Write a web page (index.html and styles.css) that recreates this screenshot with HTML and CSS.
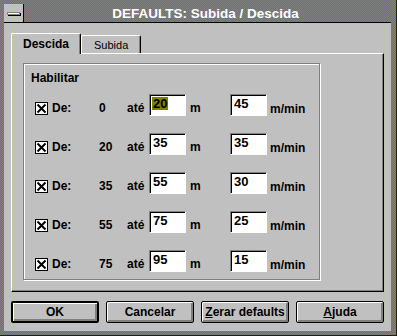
FILE: index.html
```html
<!DOCTYPE html>
<html>
    <head>
        <meta charset="UTF-8" />
        <title>DEFAULTS: Subida / Descida</title>
        <link rel="stylesheet" href="styles.css">
    </head>
    <body>
        <div class="window">
            <!-- Title bar -->
            <div class="caption">
                <div class="sysmenu"><span class="sysmenu-bar"></span></div>
                <div class="caption-title">DEFAULTS: Subida / Descida</div>
            </div>

            <div class="client">
                <div class="tabs">
                    <div class="tab tab-active">Descida</div>
                    <div class="tab">Subida</div>
                </div>

                <div class="tab-panel">
                    <div class="group">
                        <div class="group-title">Habilitar</div>

                        <div class="rows">
                            <div class="row">
                                <span class="check"><svg width="11" height="11" viewBox="0 0 11 11"><path d="M1.5 1.5 L9.5 9.5 M9.5 1.5 L1.5 9.5" stroke="#000" stroke-width="2" fill="none"/></svg></span>
                                <span class="lbl lbl-de">De:</span>
                                <span class="lbl lbl-from">0</span>
                                <span class="lbl lbl-ate">até</span>
                                <span class="field"><span class="val sel">20</span></span>
                                <span class="lbl lbl-m">m</span>
                                <span class="field"><span class="val">45</span></span>
                                <span class="lbl lbl-unit">m/min</span>
                            </div>
                            <div class="row">
                                <span class="check"><svg width="11" height="11" viewBox="0 0 11 11"><path d="M1.5 1.5 L9.5 9.5 M9.5 1.5 L1.5 9.5" stroke="#000" stroke-width="2" fill="none"/></svg></span>
                                <span class="lbl lbl-de">De:</span>
                                <span class="lbl lbl-from">20</span>
                                <span class="lbl lbl-ate">até</span>
                                <span class="field"><span class="val">35</span></span>
                                <span class="lbl lbl-m">m</span>
                                <span class="field"><span class="val">35</span></span>
                                <span class="lbl lbl-unit">m/min</span>
                            </div>
                            <div class="row">
                                <span class="check"><svg width="11" height="11" viewBox="0 0 11 11"><path d="M1.5 1.5 L9.5 9.5 M9.5 1.5 L1.5 9.5" stroke="#000" stroke-width="2" fill="none"/></svg></span>
                                <span class="lbl lbl-de">De:</span>
                                <span class="lbl lbl-from">35</span>
                                <span class="lbl lbl-ate">até</span>
                                <span class="field"><span class="val">55</span></span>
                                <span class="lbl lbl-m">m</span>
                                <span class="field"><span class="val">30</span></span>
                                <span class="lbl lbl-unit">m/min</span>
                            </div>
                            <div class="row">
                                <span class="check"><svg width="11" height="11" viewBox="0 0 11 11"><path d="M1.5 1.5 L9.5 9.5 M9.5 1.5 L1.5 9.5" stroke="#000" stroke-width="2" fill="none"/></svg></span>
                                <span class="lbl lbl-de">De:</span>
                                <span class="lbl lbl-from">55</span>
                                <span class="lbl lbl-ate">até</span>
                                <span class="field"><span class="val">75</span></span>
                                <span class="lbl lbl-m">m</span>
                                <span class="field"><span class="val">25</span></span>
                                <span class="lbl lbl-unit">m/min</span>
                            </div>
                            <div class="row">
                                <span class="check"><svg width="11" height="11" viewBox="0 0 11 11"><path d="M1.5 1.5 L9.5 9.5 M9.5 1.5 L1.5 9.5" stroke="#000" stroke-width="2" fill="none"/></svg></span>
                                <span class="lbl lbl-de">De:</span>
                                <span class="lbl lbl-from">75</span>
                                <span class="lbl lbl-ate">até</span>
                                <span class="field"><span class="val">95</span></span>
                                <span class="lbl lbl-m">m</span>
                                <span class="field"><span class="val">15</span></span>
                                <span class="lbl lbl-unit">m/min</span>
                            </div>
                        </div>
                    </div>
                </div>

                <div class="buttons">
                    <button class="btn btn-default">OK</button>
                    <button class="btn">Cancelar</button>
                    <button class="btn"><u>Z</u>erar defaults</button>
                    <button class="btn"><u>A</u>juda</button>
                </div>
            </div>
        </div>
    </body>
</html>
```

FILE: styles.css
```css
body {
    margin: 0;
    font-family: "Liberation Sans", Arial, sans-serif;
    font-size: 12px;
    font-weight: bold;
    color: #000;
    background-color: #c0c0c0;
}

/* olive dithered frame */
.window {
    width: 397px;
    height: 336px;
    box-sizing: border-box;
    padding: 4px 6px 5px 4px;
    background: repeating-conic-gradient(#808000 0 25%, #808080 0 50%) 0 0 / 2px 2px;
    box-shadow: inset -1px -1px 0 #202000;
}

.caption {
    display: flex;
    height: 18px;
    border-bottom: 1px solid #000;
    background: repeating-conic-gradient(#808000 0 25%, #808080 0 50%) 0 0 / 2px 2px;
}

.sysmenu {
    width: 19px;
    border-right: 1px solid #000;
    background-color: #c0c0c0;
    display: flex;
    align-items: flex-start;
    justify-content: center;
}

.sysmenu-bar {
    width: 11px;
    height: 1px;
    margin-top: 8px;
    background-color: #fff;
    border: 1px solid #808080;
    box-shadow: 1px 1px 0 #000;
}

.caption-title {
    flex: 1;
    text-align: center;
    color: #fff;
    font-size: 13.5px;
    line-height: 18px;
    padding-top: 1px;
    padding-right: 4px;
}

.client {
    height: 308px;
    box-sizing: border-box;
    padding: 10px 7px 0 7px;
    background-color: #c0c0c0;
}

.tabs {
    display: flex;
    align-items: flex-end;
    height: 20px;
}

.tab {
    height: 18px;
    box-sizing: border-box;
    padding: 2px 12px 0 12px;
    line-height: 14px;
    font-size: 11px;
    font-weight: normal;
    border-top: 1px solid #fff;
    border-left: 1px solid #fff;
    border-right: 1px solid #000;
    border-radius: 2px 2px 0 0;
    box-shadow: inset -1px 0 0 #808080;
}

.tab-active {
    position: relative;
    z-index: 1;
    height: 21px;
    margin-bottom: -1px;
    padding: 3px 11px 0 11px;
    font-size: 12px;
    font-weight: bold;
    background-color: #c0c0c0;
}

.tab-panel {
    height: 239px;
    box-sizing: border-box;
    padding: 9px 0 0 11px;
    border: 1px solid;
    border-color: #fff #000 #000 #fff;
    box-shadow: inset -1px -1px 0 #808080;
}

.group {
    width: 297px;
    height: 217px;
    box-sizing: border-box;
    border: 1px solid #808080;
    box-shadow: inset 1px 1px 0 #fff, 1px 1px 0 #fff;
}

.group-title {
    margin: 7px 0 0 7px;
    line-height: 14px;
}

.rows {
    display: flex;
    flex-direction: column;
    gap: 17px;
    margin-top: 9px;
}

.row {
    display: flex;
    align-items: flex-end;
    height: 22px;
}

.check {
    width: 13px;
    height: 13px;
    box-sizing: border-box;
    margin: 0 0 1px 11px;
    border: 1px solid #000;
    background-color: #fff;
    display: flex;
    align-items: center;
    justify-content: center;
}

.lbl {
    line-height: 14px;
    margin-bottom: 1px;
}

.lbl-de {
    width: 47px;
    margin-left: 4px;
}

.lbl-from {
    width: 28px;
}

.lbl-ate {
    width: 22px;
}

.lbl-m {
    width: 40px;
    margin-left: 4px;
}

.lbl-unit {
    margin-left: 3px;
    margin-bottom: 0;
}

.field {
    width: 37px;
    height: 22px;
    box-sizing: border-box;
    padding-left: 2px;
    border: 1px solid;
    border-color: #808080 #fff #fff #808080;
    box-shadow: inset 1px 1px 0 #000;
    background-color: #fff;
    display: flex;
    align-items: flex-start;
}

.val {
    margin-top: 2px;
    padding: 0 1px;
    font-size: 13px;
    line-height: 13px;
}

.sel {
    background-color: #808000;
}

.buttons {
    display: flex;
    justify-content: space-between;
    margin-top: 9px;
}

.btn {
    width: 88px;
    height: 22px;
    padding: 0;
    font-family: inherit;
    font-size: 12px;
    font-weight: bold;
    color: #000;
    background-color: #c0c0c0;
    border: 1px solid #000;
    border-radius: 2px;
    box-shadow: inset 1px 1px 0 #fff, inset -1px -1px 0 #808080, inset -2px -2px 0 #808080;
}

.btn-default {
    border-width: 2px;
}
```
